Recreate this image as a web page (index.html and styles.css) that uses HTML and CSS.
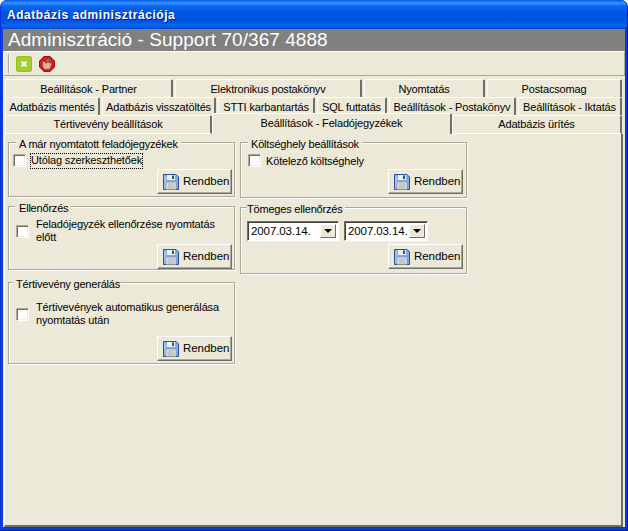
FILE: index.html
```html
<!DOCTYPE html>
<html lang="hu">
<head>
<meta charset="utf-8">
<title>Adatbázis adminisztrációja</title>
<link rel="stylesheet" href="styles.css">
</head>
<body>
<svg class="defs" width="0" height="0">
  <symbol id="floppy" viewBox="0 0 16 16">
    <path d="M.5.5h12.500l2.500 2.500v12.500h-15z" fill="#7fabe8" stroke="#2a4f92"/>
    <path d="M1.500 1.500v13h1v-13z" fill="#c3dbf8"/>
    <rect x="4" y="1" width="8" height="5" fill="#eef2fa"/>
    <rect x="9" y="1.500" width="2" height="3.500" fill="#2a4f92"/>
    <rect x="3" y="8" width="10" height="7.500" fill="#e8e6de" stroke="#7c8591" stroke-width=".6"/>
    <path d="M4.500 10h7M4.500 12h7M4.500 14h7" stroke="#a4abb3" stroke-width="1"/>
  </symbol>
</svg>
<div class="window">
  <div class="titlebar">Adatbázis adminisztrációja</div>
  <div class="client">
    <div class="banner">Adminisztráció - Support 70/367 4888</div>
    <div class="toolbar">
      <span class="grip"></span>
      <svg class="tool-icon" viewBox="0 0 16 16" width="16" height="16">
        <rect x="0" y="0" width="16" height="16" rx="3" fill="#96bf1f"/>
        <rect x="1" y="1" width="14" height="14" rx="3" fill="#a4cc2c"/>
        <path d="M5.500 5.500l5 5M10.500 5.500l-5 5" stroke="#f4f8e4" stroke-width="2.200"/>
      </svg>
      <svg class="tool-icon" viewBox="0 0 16 16" width="16" height="16">
        <path d="M5 0h6l5 5v6l-5 5H5l-5-5V5z" fill="#a80c0c"/>
        <path d="M5.500 1h5l4.500 4.500v5L10.500 15h-5L1 10.500v-5z" fill="#d81f1f"/>
        <path d="M3.500 5v5.500l2 3h5l2.500-5.500V6.500l-1.500 1V3h-1.200v4V2h-1.300v5V2.500H7.500v5L5 5z" fill="#efa98f" stroke="#6e1a10" stroke-width=".5"/>
      </svg>
    </div>
    <div class="tabs">
      <div class="tab-row">
        <div class="tab w168">Beállítások - Partner</div>
        <div class="tab w187">Elektronikus postakönyv</div>
        <div class="tab w122">Nyomtatás</div>
        <div class="tab w135">Postacsomag</div>
      </div>
      <div class="tab-row">
        <div class="tab w95">Adatbázis mentés</div>
        <div class="tab w114">Adatbázis visszatöltés</div>
        <div class="tab w98">STTI karbantartás</div>
        <div class="tab w70">SQL futtatás</div>
        <div class="tab w127">Beállítások - Postakönyv</div>
        <div class="tab w105">Beállítások - Iktatás</div>
      </div>
      <div class="tab-row last">
        <div class="tab w207">Tértivevény beállítások</div>
        <div class="tab active w240">Beállítások - Feladójegyzékek</div>
        <div class="tab w170">Adatbázis ürítés</div>
      </div>
    </div>
    <div class="page">
      <div class="column">
        <section class="group g54">
          <div class="legend">A már nyomtatott feladójegyzékek</div>
          <div class="check-row first">
            <span class="checkbox"></span>
            <span class="focus">Utólag szerkeszthetőek</span>
          </div>
          <div class="actions"><button class="button"><svg class="floppy"><use href="#floppy"/></svg>Rendben</button></div>
        </section>
        <section class="group g64">
          <div class="legend l2">Ellenőrzés</div>
          <div class="check-row second">
            <span class="checkbox"></span>
            <span class="wrap">Feladójegyzék ellenőrzése nyomtatás előtt</span>
          </div>
          <div class="actions"><button class="button"><svg class="floppy"><use href="#floppy"/></svg>Rendben</button></div>
        </section>
        <section class="group g82 mt11">
          <div class="legend l3">Tértivevény generálás</div>
          <div class="check-row third">
            <span class="checkbox"></span>
            <span class="wrap">Tértivevények automatikus generálása nyomtatás után</span>
          </div>
          <div class="actions"><button class="button"><svg class="floppy"><use href="#floppy"/></svg>Rendben</button></div>
        </section>
      </div>
      <div class="column inset">
        <section class="group g55">
          <div class="legend l4">Költséghely beállítások</div>
          <div class="check-row first">
            <span class="checkbox"></span>
            <span class="plain">Kötelező költséghely</span>
          </div>
          <div class="actions"><button class="button"><svg class="floppy"><use href="#floppy"/></svg>Rendben</button></div>
        </section>
        <section class="group g66">
          <div class="legend l5">Tömeges ellenőrzés</div>
          <div class="date-row">
            <div class="combo c92"><span class="combo-text">2007.03.14.</span><span class="combo-arrow"></span></div>
            <div class="combo c84"><span class="combo-text">2007.03.14.</span><span class="combo-arrow"></span></div>
          </div>
          <div class="actions"><button class="button"><svg class="floppy"><use href="#floppy"/></svg>Rendben</button></div>
        </section>
      </div>
    </div>
  </div>
</div>
</body>
</html>
```
FILE: styles.css
```css
* { box-sizing: border-box; }
html, body { margin: 0; padding: 0; background: #fff; }
body { width: 628px; height: 531px; overflow: hidden; font: 11px/13px "Liberation Sans", Arial, sans-serif; letter-spacing: -.15px; color: #000; }
.defs { position: absolute; }
.window {
  width: 628px; height: 531px; display: flex; flex-direction: column;
  background: #0a3fd8; border-radius: 7px 7px 0 0;
  border-left: 1px solid #0831d9; border-right: 1px solid #001ea0; border-bottom: 1px solid #001ea0;
}
.titlebar {
  height: 29px; flex: none; padding: 9px 0 0 6px;
  color: #fff; font-weight: bold; font-size: 12px; letter-spacing: .55px; text-shadow: 1px 1px 0 #0f1089;
  border-radius: 7px 7px 0 0;
  background: linear-gradient(#0058ee 0, #3a93ff 3px, #0a6af0 6px, #0055e5 12px, #0055e5 22px, #0a66ee 26px, #0046c8 29px);
}
.client { flex: 1; margin: 0 2px 3px; background: #ece9d8; display: flex; flex-direction: column; box-shadow: 1px 1px 0 #0831d9; }
.banner { height: 22px; flex: none; background: #808080; color: #fff; font-size: 19px; line-height: 22px; padding-left: 5px; letter-spacing: .05px; }
.toolbar {
  height: 25px; flex: none; display: flex; align-items: center; gap: 7px; padding-left: 4px;
  border: 1px solid #fff; border-right-color: #aca899; border-bottom-color: #aca899;
}
.grip { width: 2px; height: 19px; border-left: 1px solid #aca899; border-right: 1px solid #fff; margin-right: -1px; }
.tool-icon { display: block; flex: none; }
.tabs { flex: none; padding: 3px 0 0 2px; display: flex; flex-direction: column; }
.tab-row { display: flex; height: 18px; }
.tab-row.last { height: 19px; }
.tab {
  flex: none; text-align: center; line-height: 18px; background: #ece9d8; white-space: nowrap;
  border: 1px solid #fff; border-right: 2px solid #716f64; border-bottom: 0; border-radius: 2px 2px 0 0;
  margin-right: 2px;
}
.tab-row.last .tab { margin-right: 0; border-bottom: 1px solid #fff; line-height: 17px; }
.tab.active { height: 21px; margin-top: -2px; line-height: 19px !important; border-bottom: 0 !important; padding-bottom: 2px; }
.w168 { width: 168px; } .w187 { width: 187px; } .w122 { width: 121px; } .w135 { width: 135px; }
.w95 { width: 95px; } .w114 { width: 114px; } .w98 { width: 97px; } .w70 { width: 70px; } .w127 { width: 127px; } .w105 { width: 104px; }
.w207 { width: 207px; } .w240 { width: 240px; } .w170 { width: 170px; }
.page {
  flex: 1; display: flex; gap: 5px; padding: 8px 0 0 3px; margin: 0 2px 0 1px;
  border-left: 1px solid #fff; border-right: 2px solid #716f64; border-bottom: 2px solid #716f64;
}
.column { display: flex; flex-direction: column; gap: 9px; width: 227px; }
.inset .actions { padding-right: 1px; }
.inset .check-row.first { padding-left: 7px; }
.group { border: 1px solid #aca899; box-shadow: 1px 1px 0 #fff, inset 1px 1px 0 #fff; padding: 0 2px 0 0; display: flex; flex-direction: column; }
.g54 { height: 55px; } .g55 { height: 56px; } .g64 { height: 64px; } .g66 { height: 67px; } .g82 { height: 82px; }
.mt11 { margin-top: 3px; }
.legend { width: fit-content; height: 13px; margin: -7px 0 0 7px; padding: 0 3px; background: #ece9d8; white-space: nowrap; flex: none; font-size: 11px; line-height: 17px; letter-spacing: -.2px; }
.legend.l2 { margin-left: 6px; padding: 0 3px 0 4px; }
.legend.l3 { margin-left: 4px; padding: 0 0 0 3px; }
.legend.l4 { margin-left: 7px; padding: 0 3px; }
.legend.l5 { margin-left: 6px; padding: 0 3px 0 0; }
.check-row { display: flex; align-items: flex-start; flex: none; }
.check-row.first { padding: 5px 0 0 4px; height: 20px; }
.check-row.second { padding: 6px 0 0 7px; height: 31px; }
.check-row.third { padding: 13px 0 0 7px; height: 47px; }
.second .checkbox, .third .checkbox { margin-top: 6px; }
.checkbox { width: 13px; height: 13px; flex: none; background: #fff; border: 1px solid #aca899; border-right-color: #fff; border-bottom-color: #fff; box-shadow: inset 1px 1px 0 #716f64, inset -1px -1px 0 #f1efe2; }
.focus { margin-left: 4px; margin-top: -1px; padding: 1px 1px; height: 16px; outline: 1px dotted #000; outline-offset: -1px; white-space: nowrap; }
.plain { margin-left: 5px; margin-top: 1px; white-space: nowrap; }
.wrap { margin-left: 7px; width: 190px; }
.second .wrap, .third .wrap { margin-top: -1px; }
.actions { display: flex; justify-content: flex-end; flex: none; }
.button {
  width: 75px; height: 25px; display: flex; align-items: center; gap: 4px; padding: 0 0 0 5px; font: inherit; font-size: 11.5px; letter-spacing: -.05px; color: #000; white-space: nowrap;
  background: #ece9d8; border: 1px solid #fff; border-right-color: #716f64; border-bottom-color: #716f64; border-radius: 0;
  box-shadow: inset -1px -1px 0 #aca899;
}
.floppy { width: 16px; height: 16px; flex: none; display: block; }
.date-row { display: flex; gap: 5px; padding: 7px 0 3px 6px; flex: none; }
.combo { height: 20px; display: flex; background: #fff; border: 1px solid #716f64; border-right-color: #fff; border-bottom-color: #fff; box-shadow: inset 1px 1px 0 #404040, 1px 1px 0 #f1efe2; padding: 2px; }
.c92 { width: 92px; } .c84 { width: 84px; }
.combo-text { flex: 1; padding: 1px 0 0 1px; white-space: nowrap; overflow: hidden; font-size: 11.5px; letter-spacing: -.1px; }
.combo-arrow { width: 16px; flex: none; background: #ece9d8; border: 1px solid #fff; border-right-color: #716f64; border-bottom-color: #716f64; display: flex; align-items: center; justify-content: center; }
.combo-arrow::after { content: ""; border: 4px solid transparent; border-top: 4px solid #000; border-bottom: 0; }
```
